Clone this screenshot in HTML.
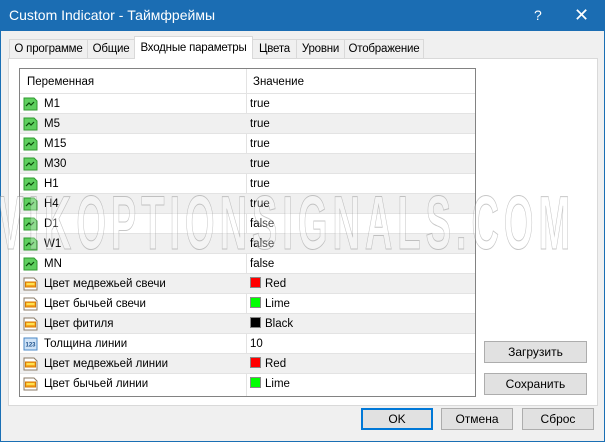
<!DOCTYPE html>
<html><head><meta charset="utf-8"><style>
*{box-sizing:border-box;margin:0;padding:0}
body{width:605px;height:442px;overflow:hidden;background:#f0f0f0;font-family:"Liberation Sans","Noto Sans CJK SC",sans-serif;font-size:11.5px;color:#000;position:relative}
.win{position:absolute;left:0;top:0;width:605px;height:442px;border:1px solid #1a6fb4;background:#f0f0f0}
.title{position:absolute;left:0;top:0;width:605px;height:31px;background:#1b6db3;color:#fff;font-size:14px;line-height:31px;padding-left:9px}
.title .q{position:absolute;left:534px;top:0;font-size:14px}
.title .x{position:absolute;left:574px;top:0;font-size:18px}
.tab{position:absolute;top:39px;height:20px;border:1px solid #d9d9d9;border-bottom:none;background:#f0f0f0;line-height:19px;text-align:center;font-size:11.5px;letter-spacing:-0.2px}
.tab.sel{top:36px;height:23px;background:#fff;border-color:#d9d9d9;z-index:2;line-height:22px}
.panel{position:absolute;left:8px;top:58px;width:590px;height:348px;background:#fff;border:1px solid #d9d9d9}
.grid{position:absolute;left:19px;top:68px;width:457px;height:329px;border:1px solid #828282;background:#fff;overflow:hidden}
.hdr{position:absolute;left:0;top:0;width:455px;height:24px;line-height:26px}
.row{position:absolute;left:0;width:455px;height:20px;line-height:20px;border-top:1px solid #e3e3e3}
.row.g{background:#f0f0f0}
.c1{position:absolute;left:24px}
.c2{position:absolute;left:230px}
.vl{position:absolute;left:226px;top:0;width:1px;height:329px;background:#e3e3e3}
.ic{position:absolute;left:3px;top:3px;width:15px;height:14px}
.sw{display:inline-block;width:11px;height:11px;vertical-align:-1px;margin-right:4px;border:1px solid #888}
.btn{position:absolute;height:22px;background:#e1e1e1;border:1px solid #adadad;text-align:center;line-height:20px;font-size:12px}
.wm{position:absolute;left:-2px;top:180px;font-size:76px;font-weight:bold;color:rgba(255,255,255,0.3);-webkit-text-stroke:1px rgba(130,130,130,0.45);transform:scaleX(0.5);transform-origin:0 0;white-space:nowrap;letter-spacing:10px;z-index:5;font-family:"Liberation Sans Narrow","Liberation Sans",sans-serif}
</style></head><body>
<div class="win"></div>
<div class="title">Custom Indicator - Таймфреймы<span class="q">?</span><span class="x">✕</span></div>
<div class="tab" style="left:9px;width:79px">О программе</div>
<div class="tab" style="left:87px;width:48px">Общие</div>
<div class="tab sel" style="left:134px;width:119px">Входные параметры</div>
<div class="tab" style="left:252px;width:45px">Цвета</div>
<div class="tab" style="left:296px;width:49px">Уровни</div>
<div class="tab" style="left:344px;width:80px">Отображение</div>
<div class="panel"></div>
<div class="grid">
<div class="vl"></div>
<div class="hdr"><span class="c1" style="left:7px">Переменная</span><span class="c2" style="left:233px">Значение</span></div>
<div id="rows"></div>
</div>
<div class="wm">VIKOPTIONSIGNALS.COM</div>
<div class="btn" style="left:484px;top:341px;width:103px">Загрузить</div>
<div class="btn" style="left:484px;top:373px;width:103px">Сохранить</div>
<div class="btn" style="left:361px;top:408px;width:72px;border:1px solid #0078d7;border-width:2px;line-height:18px">OK</div>
<div class="btn" style="left:441px;top:408px;width:72px">Отмена</div>
<div class="btn" style="left:522px;top:408px;width:72px">Сброс</div>
<script>
var G='<svg class="ic" viewBox="0 0 15 14"><path d="M1 1h10l3 3v9H1z" fill="#5fcf5f" stroke="#2e9a2e"/><path d="M3 9l3-3 2 2 3-3" stroke="#0a4a0a" fill="none" stroke-width="1.2"/></svg>';
var C='<svg class="ic" viewBox="0 0 15 14"><path d="M1 1h10l3 3v9H1z" fill="#fff" stroke="#8a7a66"/><rect x="2.5" y="5" width="10" height="5" fill="#f5a623" stroke="#d67a00"/><rect x="3.5" y="6" width="8" height="2" fill="#ffe14d"/></svg>';
var N='<svg class="ic" viewBox="0 0 15 14"><rect x="1" y="1" width="13" height="12" fill="#cfe3f7" stroke="#4a87c5"/><text x="7.5" y="9.5" font-size="6" font-family="Liberation Sans" text-anchor="middle" fill="#1b4f8a" font-weight="bold">123</text></svg>';
var d=[[G,'M1','true'],[G,'M5','true'],[G,'M15','true'],[G,'M30','true'],[G,'H1','true'],[G,'H4','true'],[G,'D1','false'],[G,'W1','false'],[G,'MN','false'],
[C,'Цвет медвежьей свечи','<span class="sw" style="background:#f00"></span>Red'],
[C,'Цвет бычьей свечи','<span class="sw" style="background:#0f0"></span>Lime'],
[C,'Цвет фитиля','<span class="sw" style="background:#000"></span>Black'],
[N,'Толщина линии','10'],
[C,'Цвет медвежьей линии','<span class="sw" style="background:#f00"></span>Red'],
[C,'Цвет бычьей линии','<span class="sw" style="background:#0f0"></span>Lime']];
var h='';for(var i=0;i<d.length;i++){h+='<div class="row'+(i%2?' g':'')+'" style="top:'+(24+i*20)+'px">'+d[i][0]+'<span class="c1">'+d[i][1]+'</span><span class="c2">'+d[i][2]+'</span></div>';}
document.getElementById('rows').innerHTML=h;
</script>
</body></html>
